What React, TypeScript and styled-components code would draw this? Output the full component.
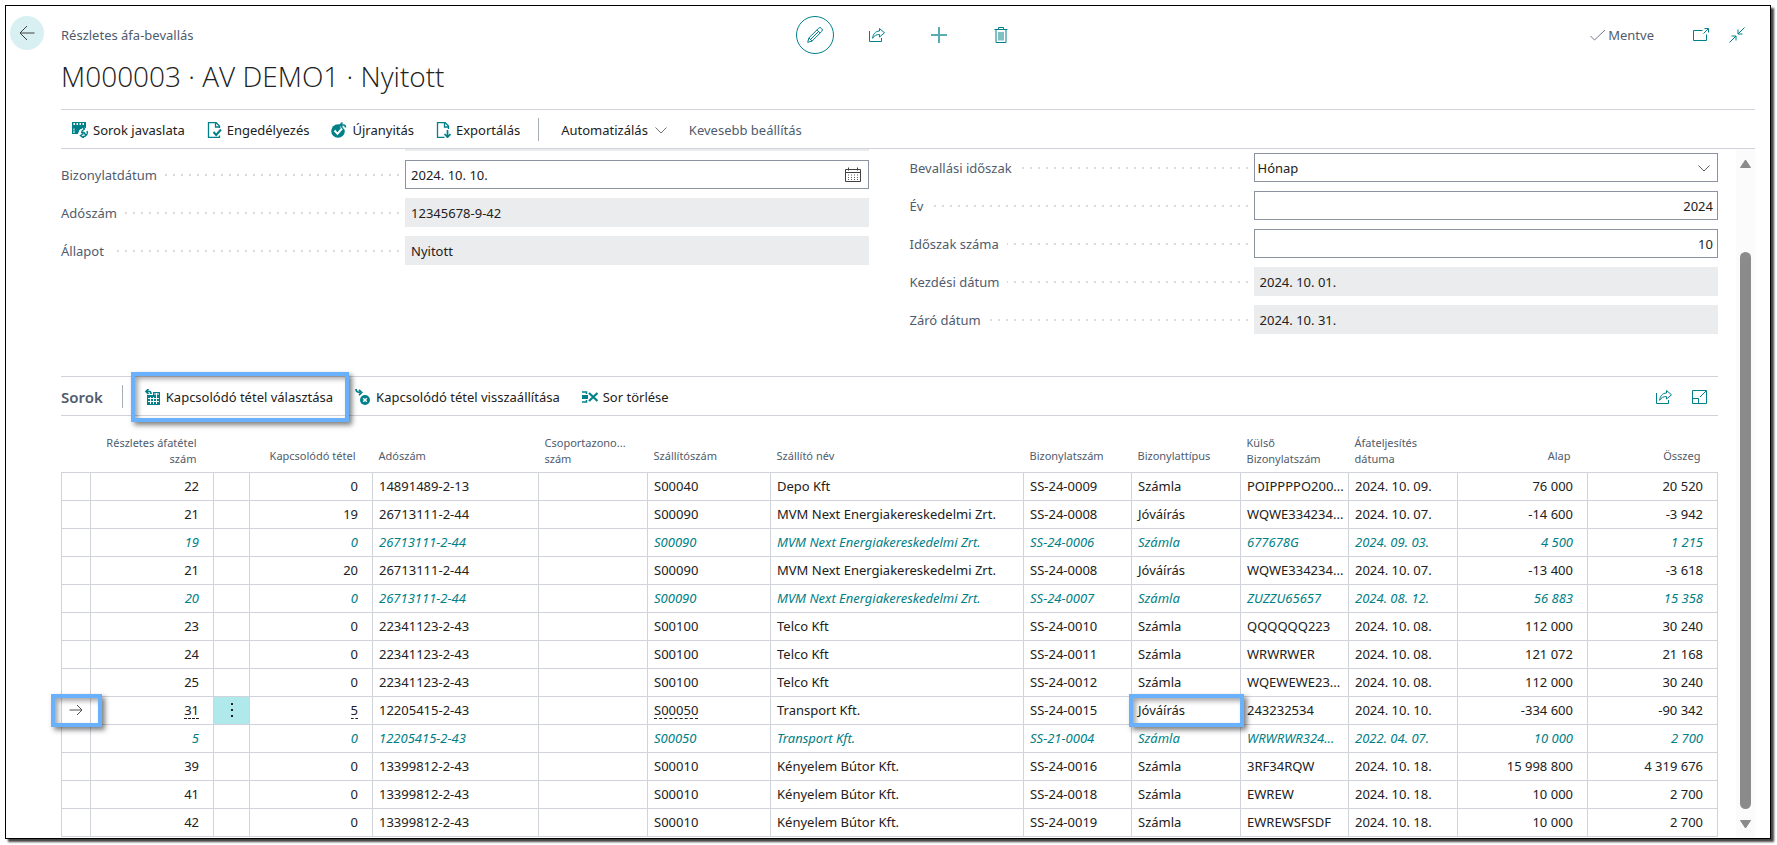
import React from 'react';
import styled, { createGlobalStyle, css } from 'styled-components';

const teal = '#008089';
const ink = '#212121';
const muted = '#505c6d';
const rule = '#d0d3d9';

const GlobalStyle = createGlobalStyle`
  *, *::before, *::after { box-sizing: border-box; }
  body {
    margin: 0;
    background: #fff;
    color: ${ink};
    font-family: "Noto Sans", "Open Sans", sans-serif;
    font-size: 13px;
    line-height: 20px;
    overflow: hidden;
  }
  button, input, select { font: inherit; color: inherit; }
  svg { display: block; flex: none; }
`;

const Frame = styled.div`
  display: flex;
  min-height: calc(100vh - 11px);
  margin: 5px 6px 6px 5px;
  border: 1px solid #000;
  background: #fff;
  box-shadow: 3px 3px 2px #444;
`;

const Gutter = styled.nav`
  flex: 0 0 55px;
  padding: 10px 0 0 4px;
`;

const BackButton = styled.button`
  display: flex;
  align-items: center;
  justify-content: center;
  width: 34px;
  height: 34px;
  padding: 0;
  border: 0;
  border-radius: 50%;
  background: #d9f0f2;
  color: #404040;
`;

const Page = styled.main`
  flex: 1;
  min-width: 0;
  display: flex;
  flex-direction: column;
  padding-right: 15px;
`;

const TopBar = styled.header`
  display: grid;
  grid-template-columns: 1fr auto 1fr;
  align-items: center;
  height: 38px;
  margin-top: 10px;
  color: ${muted};
`;

const TopActions = styled.div`
  display: flex;
  align-items: center;
  gap: 24px;
`;

const RoundButton = styled.button<{ $ring?: boolean }>`
  display: flex;
  align-items: center;
  justify-content: center;
  width: 38px;
  height: 38px;
  padding: 0;
  border: 1px solid ${(p) => (p.$ring ? teal : 'transparent')};
  border-radius: 50%;
  background: none;
  color: ${teal};
`;

const TopStatus = styled.div`
  display: flex;
  align-items: center;
  justify-content: flex-end;
  padding-right: 10px;
`;

const Saved = styled.span`
  display: flex;
  align-items: center;
  gap: 2px;
  margin-right: 39px;
`;

const IconButton = styled.button`
  display: flex;
  padding: 0;
  border: 0;
  background: none;
  color: ${teal};
`;

const IconGroup = styled.div`
  display: flex;
  align-items: center;
  gap: 20px;
`;

const Title = styled.h1`
  margin: 0;
  padding: 2px 0 13px;
  font-family: "Open Sans", "Noto Sans", sans-serif;
  font-size: 28px;
  line-height: 40px;
  font-weight: 300;
  color: ${ink};
`;

const ActionBar = styled.div`
  display: flex;
  align-items: center;
  height: 40px;
  padding: 1px 0 0 11px;
  border-top: 1px solid ${rule};
  border-bottom: 1px solid ${rule};
`;

const Action = styled.button<{ $muted?: boolean }>`
  display: flex;
  align-items: center;
  gap: 5px;
  margin-right: 22px;
  padding: 0;
  border: 0;
  background: none;
  white-space: nowrap;
  color: ${(p) => (p.$muted ? muted : ink)};
  svg { color: ${teal}; }
`;

const MenuAction = styled(Action)`
  gap: 7px;
  svg { color: #707070; }
`;

const Separator = styled.span`
  width: 1px;
  height: 23px;
  margin: 0 22px 0 -4px;
  background: #a9afb9;
`;

const Body = styled.div`
  flex: 1;
  display: flex;
  gap: 18px;
`;

const Content = styled.div`
  flex: 1;
  min-width: 0;
`;

const ScrollTrack = styled.div`
  flex: 0 0 19px;
  display: flex;
  flex-direction: column;
  align-items: center;
  padding: 10px 0 9px;
  background: #fbfbfb;
  color: #8b8b8b;
`;

const ScrollSpace = styled.span`
  flex: 83 0 0;
`;

const ScrollThumb = styled.span`
  flex: 556 0 0;
  width: 11px;
  margin-bottom: 10px;
  border-radius: 6px;
  background: #8b8b8b;
`;

const Fields = styled.div`
  display: grid;
  grid-template-columns: 1fr 1fr;
  gap: 40px;
  height: 227px;
`;

const FieldColumn = styled.div<{ $top?: number }>`
  display: flex;
  flex-direction: column;
  gap: 9px;
  padding-top: ${(p) => p.$top ?? 0}px;
`;

const FieldRow = styled.div`
  display: grid;
  grid-template-columns: 20fr 27fr;
  align-items: center;
`;

const CutOffField = styled.div`
  grid-column: 2;
  height: 2px;
  background: #ebecee;
`;

const FieldLabel = styled.label`
  display: flex;
  align-items: center;
  gap: 8px;
  padding-right: 6px;
  color: ${muted};
  white-space: nowrap;
  &::after {
    content: "";
    flex: 1;
    height: 2px;
    background: repeating-linear-gradient(to left, #d8dadd 0 2px, transparent 2px 8px);
  }
`;

const Box = styled.div<{ $readOnly?: boolean }>`
  display: grid;
  grid-template-columns: 1fr auto;
  align-items: center;
  height: 29px;
  border: 1px solid ${(p) => (p.$readOnly ? '#ebecee' : '#8c93a0')};
  background: ${(p) => (p.$readOnly ? '#ebecee' : '#fff')};
`;

const control = css`
  grid-row: 1;
  width: 100%;
  min-width: 0;
  height: 27px;
  border: 0;
  outline: 0;
  border-radius: 0;
  background: none;
`;

const TextInput = styled.input<{ $right?: boolean }>`
  ${control}
  grid-column: 1;
  padding: 0 4px 0 5px;
  text-align: ${(p) => (p.$right ? 'right' : 'left')};
`;

const Select = styled.select`
  ${control}
  grid-column: 1 / 3;
  padding: 0 3px;
  appearance: none;
`;

const BoxIcon = styled.span`
  grid-row: 1;
  grid-column: 2;
  padding-right: 7px;
  color: #606060;
  pointer-events: none;
`;

const LinesBar = styled(ActionBar)`
  padding-left: 0;
`;

const LinesTitle = styled.h2`
  margin: 0 23px 0 0;
  font-size: 15px;
  line-height: 20px;
  font-weight: 600;
  color: ${muted};
`;

const LinesTools = styled(IconGroup)`
  margin-left: auto;
  padding-right: 10px;
`;

const Marked = styled.div`
  position: relative;
`;

const Marker = styled.span<{ $y: number; $left: number; $right: number }>`
  position: absolute;
  z-index: 1;
  inset: ${(p) => `${-p.$y}px ${-p.$right}px ${-p.$y}px ${-p.$left}px`};
  border: 4px solid #6ab1fd;
  box-shadow: 3px 3px 5px rgba(0, 0, 0, 0.5), inset 3px 3px 5px rgba(0, 0, 0, 0.35);
  pointer-events: none;
`;

const Table = styled.table`
  width: 100%;
  margin-top: 17px;
  border-collapse: collapse;
  table-layout: fixed;
`;

const HeadCell = styled.th<{ $right?: boolean; $single?: boolean }>`
  height: 39px;
  padding: 0 ${(p) => (p.$right ? 17 : 0)}px ${(p) => (p.$single ? 8 : 5)}px ${(p) => (p.$right ? 0 : 6)}px;
  vertical-align: bottom;
  font-size: 11px;
  line-height: 16px;
  font-weight: 400;
  color: ${muted};
  text-align: ${(p) => (p.$right ? 'right' : 'left')};
  white-space: pre-line;
`;

const Row = styled.tr<{ $linked?: boolean }>`
  height: 28px;
  ${(p) => p.$linked && css`
    color: #007f87;
    font-style: italic;
  `}
`;

const Cell = styled.td<{ $right?: boolean; $active?: boolean }>`
  position: relative;
  padding: ${(p) => (p.$right ? '0 14px 0 0' : '0 0 0 6px')};
  border: 1px solid ${rule};
  text-align: ${(p) => (p.$right ? 'right' : 'left')};
  white-space: nowrap;
  background: ${(p) => (p.$active ? '#b0e9ec' : 'none')};
`;

const IconCell = styled(Cell)`
  padding: 0;
  svg, button { margin: 0 auto; }
`;

const DrillLink = styled.a`
  display: inline-block;
  line-height: 15px;
  color: inherit;
  text-decoration: none;
  border-bottom: 1px dashed ${ink};
`;

const Svg = ({ w = 16, h = 16, children, sw = 1 }: { w?: number; h?: number; sw?: number; children: React.ReactNode }) => (
  <svg width={w} height={h} viewBox={`0 0 ${w} ${h}`} fill="none" stroke="currentColor" strokeWidth={sw} aria-hidden="true">
    {children}
  </svg>
);

const ArrowLeft = () => <Svg><path d="M15.5 8H1M8 1L1 8l7 7" /></Svg>;
const Pencil = () => (
  <Svg>
    <path d="M.7 15.3l1.2-4.4L11.6 1.3a1.9 1.9 0 0 1 2.8 0l.3.3a1.9 1.9 0 0 1 0 2.8L5.1 14.1zM1.9 10.9l3.2 3.2M10 2.9l3.1 3.1M3.6 12.4L12 4" />
  </Svg>
);
const Share = () => (
  <Svg>
    <path d="M.5 4v10.500h12V11" />
    <path d="M10.500 1.500l5 4.300-5 4.200V7.600C7.500 7.400 5 8.600 3.700 11.300 3.900 7.200 6.300 4.200 10.500 4z" />
  </Svg>
);
const Plus = () => <Svg sw={2}><g opacity=".65"><path d="M8 0v16M0 8h16" /></g></Svg>;
const Trash = () => (
  <Svg>
    <path d="M1.500 2.500h13M5.500 2.500v-2h5v2M3 2.500v13h10v-13M6 5v8.500M8 5v8.500M10 5v8.500" />
  </Svg>
);
const Check = () => <Svg><path d="M.5 9l4 4L15 3" stroke="#707785" /></Svg>;
const PopOut = () => <Svg><path d="M9.500 3.500h-9v10h13V7.500M10.500 6.500L15 2M11.500 1.500h4v4" /></Svg>;
const Collapse = () => <Svg><path d="M.5 15.500L7 9M2.500 9H7v4.500M15.500.5L9 7M9 2.500V7h4.500" /></Svg>;
const Expand = () => <Svg><path d="M10 1.500H.5v13h14V6M.5 9.500h6v5M8 8l6-6M10 1.500h4.500V6" /></Svg>;
const Chevron = () => <Svg w={12} h={8}><path d="M.5 1.500l5.500 5.500 5.500-5.500" /></Svg>;
const Calendar = () => (
  <Svg>
    <path d="M.5 2.500h15v12H.5zM.5 5.500h15M3.500.5v3M12.500.5v3" stroke="#404040" />
    <path d="M3 8h10M3 10.500h10M3 12.500h10" strokeDasharray="1 2" />
  </Svg>
);
const SuggestLines = () => (
  <Svg>
    <path d="M0 0h14v6a6 6 0 0 0-8 6H0z" fill={teal} stroke="none" />
    <path d="M1.500 2h1.500M4.500 2H6M7.500 2H9M10.500 2H12M1.500 7.500h1M1.500 10h1" stroke="#fff" strokeWidth="2" />
    <path d="M6 10.500C6 8 7.500 6.500 9.500 6v-2l3 3-3 2.500M15 9c1 3-1 5.500-3.500 5.500V16l-3-2.500 3-2M9 10.500h3l2 3" strokeWidth="1.400" />
  </Svg>
);
const DocCheck = () => (
  <Svg w={15}>
    <path d="M12.500 6V4L9 .5H1.500v15h11v-2M8.500.5V5h4" strokeWidth="1.300" />
    <path d="M6.500 10l2.700 3L14 7.500" strokeWidth="2" />
  </Svg>
);
const Reopen = () => (
  <Svg>
    <circle cx="7" cy="9" r="6.800" fill={teal} stroke="none" />
    <path d="M3.500 8.500l3 3.300L11 6.500" stroke="#fff" strokeWidth="2" />
    <path d="M9 3.500h5.500v3.500" stroke="#fff" strokeWidth="4" />
    <path d="M11.500.5L9 3l2.500 2.500M9.500 3h3q2 0 2 2.500" strokeWidth="1.500" />
  </Svg>
);
const DocExport = () => (
  <Svg w={15}>
    <path d="M12.500 7V4L9 .5H1.500v15h7M8.500.5V5h4" strokeWidth="1.300" />
    <path d="M11.500 8v7M8.500 12l3 3.200 3-3.200" strokeWidth="1.700" />
  </Svg>
);
const PickEntry = () => (
  <Svg>
    <path d="M2 6h13v10H2zM8 3h7v3H8z" fill={teal} stroke="none" />
    <path d="M3 9.500h11M3 12.500h11M5.500 8v7M8.500 8v7M11.500 4v11M9 5h5" stroke="#fff" />
    <path d="M3.500 0L1 2.500 3.500 5M1 2.500h3.500Q6 2.500 6 5" strokeWidth="1.700" />
  </Svg>
);
const ResetEntry = () => (
  <Svg>
    <circle cx="10" cy="11" r="5" fill={teal} stroke="none" />
    <path d="M8.200 9.200l3.600 3.600M11.800 9.200l-3.600 3.600" stroke="#fff" strokeWidth="1.400" />
    <path d="M1 0q0 3.500 4.500 3.500M4 .8l2.700 2.700L4 6.200" strokeWidth="1.700" />
  </Svg>
);
const DeleteLine = () => (
  <Svg>
    <path d="M0 3h4.500v2M0 13h4.500v-2" strokeWidth="1.500" />
    <path d="M0 6h6v4H0z" fill={teal} stroke="none" />
    <path d="M7 4l8.500 8M15.500 4L7 12" strokeWidth="2.200" />
  </Svg>
);
const ArrowRight = () => <Svg w={14} h={12}><path d="M.5 6H13M8 1l5 5-5 5" stroke="#505050" /></Svg>;
const Dots = () => (
  <Svg w={4} h={16}><path d="M2 1v2M2 7v2M2 13v2" stroke={ink} strokeWidth="2" /></Svg>
);
const Triangle = ({ down }: { down?: boolean }) => (
  <Svg w={13} h={10}>
    <path d={down ? 'M1.500 1.500h10L6.500 9z' : 'M1.500 8.500h10L6.500 1z'} fill="currentColor" strokeLinejoin="round" />
  </Svg>
);

type FieldProps = { id: string; label: string; value: string; readOnly?: boolean; right?: boolean; icon?: React.ReactNode };

const Field = ({ id, label, value, readOnly, right, icon }: FieldProps) => (
  <FieldRow>
    <FieldLabel htmlFor={id}>{label}</FieldLabel>
    <Box $readOnly={readOnly}>
      <TextInput id={id} defaultValue={value} readOnly={readOnly} $right={right} />
      {icon && <BoxIcon>{icon}</BoxIcon>}
    </Box>
  </FieldRow>
);

const columns: { label: string; width: number; right?: boolean }[] = [
  { label: '', width: 29 },
  { label: 'Részletes áfatétel\nszám', width: 123, right: true },
  { label: '', width: 36 },
  { label: 'Kapcsolódó tétel', width: 123, right: true },
  { label: 'Adószám', width: 166 },
  { label: 'Csoportazono...\nszám', width: 109 },
  { label: 'Szállítószám', width: 123 },
  { label: 'Szállító név', width: 253 },
  { label: 'Bizonylatszám', width: 108 },
  { label: 'Bizonylattípus', width: 109 },
  { label: 'Külső\nBizonylatszám', width: 108 },
  { label: 'Áfateljesítés\ndátuma', width: 109 },
  { label: 'Alap', width: 130, right: true },
  { label: 'Összeg', width: 130, right: true },
];

type Line = [string, string, string, string, string, string, string, string, string, string, string];

const mvm = 'MVM Next Energiakereskedelmi Zrt.';
const lines: Line[] = [
  ['22', '0', '14891489-2-13', 'S00040', 'Depo Kft', 'SS-24-0009', 'Számla', 'POIPPPPO200...', '2024. 10. 09.', '76 000', '20 520'],
  ['21', '19', '26713111-2-44', 'S00090', mvm, 'SS-24-0008', 'Jóváírás', 'WQWE334234...', '2024. 10. 07.', '-14 600', '-3 942'],
  ['19', '0', '26713111-2-44', 'S00090', mvm, 'SS-24-0006', 'Számla', '677678G', '2024. 09. 03.', '4 500', '1 215'],
  ['21', '20', '26713111-2-44', 'S00090', mvm, 'SS-24-0008', 'Jóváírás', 'WQWE334234...', '2024. 10. 07.', '-13 400', '-3 618'],
  ['20', '0', '26713111-2-44', 'S00090', mvm, 'SS-24-0007', 'Számla', 'ZUZZU65657', '2024. 08. 12.', '56 883', '15 358'],
  ['23', '0', '22341123-2-43', 'S00100', 'Telco Kft', 'SS-24-0010', 'Számla', 'QQQQQQ223', '2024. 10. 08.', '112 000', '30 240'],
  ['24', '0', '22341123-2-43', 'S00100', 'Telco Kft', 'SS-24-0011', 'Számla', 'WRWRWER', '2024. 10. 08.', '121 072', '21 168'],
  ['25', '0', '22341123-2-43', 'S00100', 'Telco Kft', 'SS-24-0012', 'Számla', 'WQEWEWE23...', '2024. 10. 08.', '112 000', '30 240'],
  ['31', '5', '12205415-2-43', 'S00050', 'Transport Kft.', 'SS-24-0015', 'Jóváírás', '243232534', '2024. 10. 10.', '-334 600', '-90 342'],
  ['5', '0', '12205415-2-43', 'S00050', 'Transport Kft.', 'SS-21-0004', 'Számla', 'WRWRWR324...', '2022. 04. 07.', '10 000', '2 700'],
  ['39', '0', '13399812-2-43', 'S00010', 'Kényelem Bútor Kft.', 'SS-24-0016', 'Számla', '3RF34RQW', '2024. 10. 18.', '15 998 800', '4 319 676'],
  ['41', '0', '13399812-2-43', 'S00010', 'Kényelem Bútor Kft.', 'SS-24-0018', 'Számla', 'EWREW', '2024. 10. 18.', '10 000', '2 700'],
  ['42', '0', '13399812-2-43', 'S00010', 'Kényelem Bútor Kft.', 'SS-24-0019', 'Számla', 'EWREWSFSDF', '2024. 10. 18.', '10 000', '2 700'],
];
const linkedLines = ['19', '20', '5'];

const LineRow = ({ line }: { line: Line }) => {
  const [entry, related, taxNo, vendor, name, docNo, docType, extNo, date, base, amount] = line;
  const current = entry === '31';
  const drill = (text: string) => (current ? <DrillLink href="#">{text}</DrillLink> : text);
  return (
    <Row $linked={linkedLines.includes(entry)}>
      <IconCell>
        {current && <ArrowRight />}
        {current && <Marker $y={3} $left={11} $right={12} />}
      </IconCell>
      <Cell $right>{drill(entry)}</Cell>
      <IconCell $active={current}>
        {current && <IconButton aria-label="Sor műveletei"><Dots /></IconButton>}
      </IconCell>
      <Cell $right>{drill(related)}</Cell>
      <Cell>{taxNo}</Cell>
      <Cell />
      <Cell>{drill(vendor)}</Cell>
      <Cell>{name}</Cell>
      <Cell>{docNo}</Cell>
      <Cell>
        {docType}
        {current && <Marker $y={3} $left={3} $right={4} />}
      </Cell>
      <Cell>{extNo}</Cell>
      <Cell>{date}</Cell>
      <Cell $right>{base}</Cell>
      <Cell $right>{amount}</Cell>
    </Row>
  );
};

export default function App() {
  return (
    <>
      <GlobalStyle />
      <Frame>
        <Gutter>
          <BackButton aria-label="Vissza"><ArrowLeft /></BackButton>
        </Gutter>
        <Page>
          <TopBar>
            <span>Részletes áfa-bevallás</span>
            <TopActions>
              <RoundButton $ring aria-label="Szerkesztés"><Pencil /></RoundButton>
              <RoundButton aria-label="Megosztás"><Share /></RoundButton>
              <RoundButton aria-label="Új"><Plus /></RoundButton>
              <RoundButton aria-label="Törlés"><Trash /></RoundButton>
            </TopActions>
            <TopStatus>
              <Saved><Check />Mentve</Saved>
              <IconGroup>
                <IconButton aria-label="Megnyitás új ablakban"><PopOut /></IconButton>
                <IconButton aria-label="Kicsinyítés"><Collapse /></IconButton>
              </IconGroup>
            </TopStatus>
          </TopBar>
          <Title>M000003 · AV DEMO1 · Nyitott</Title>
          <ActionBar>
            <Action><SuggestLines />Sorok javaslata</Action>
            <Action><DocCheck />Engedélyezés</Action>
            <Action><Reopen />Újranyitás</Action>
            <Action><DocExport />Exportálás</Action>
            <Separator />
            <MenuAction>Automatizálás<Chevron /></MenuAction>
            <Action $muted>Kevesebb beállítás</Action>
          </ActionBar>
          <Body>
            <Content>
              <Fields>
                <FieldColumn>
                  <FieldRow><CutOffField /></FieldRow>
                  <Field id="date" label="Bizonylatdátum" value="2024. 10. 10." icon={<Calendar />} />
                  <Field id="tax" label="Adószám" value="12345678-9-42" readOnly />
                  <Field id="state" label="Állapot" value="Nyitott" readOnly />
                </FieldColumn>
                <FieldColumn $top={4}>
                  <FieldRow>
                    <FieldLabel htmlFor="period">Bevallási időszak</FieldLabel>
                    <Box>
                      <Select id="period" defaultValue="Hónap"><option>Hónap</option></Select>
                      <BoxIcon><Chevron /></BoxIcon>
                    </Box>
                  </FieldRow>
                  <Field id="year" label="Év" value="2024" right />
                  <Field id="number" label="Időszak száma" value="10" right />
                  <Field id="start" label="Kezdési dátum" value="2024. 10. 01." readOnly />
                  <Field id="end" label="Záró dátum" value="2024. 10. 31." readOnly />
                </FieldColumn>
              </Fields>
              <LinesBar>
                <LinesTitle>Sorok</LinesTitle>
                <Separator />
                <Marked>
                  <Action><PickEntry />Kapcsolódó tétel választása</Action>
                  <Marker $y={15} $left={14} $right={-6} />
                </Marked>
                <Action><ResetEntry />Kapcsolódó tétel visszaállítása</Action>
                <Action><DeleteLine />Sor törlése</Action>
                <LinesTools>
                  <IconButton aria-label="Megosztás"><Share /></IconButton>
                  <IconButton aria-label="Kibontás"><Expand /></IconButton>
                </LinesTools>
              </LinesBar>
              <Table>
                <colgroup>
                  {columns.map((c, i) => <col key={i} width={c.width} />)}
                </colgroup>
                <thead>
                  <tr>
                    {columns.map((c, i) => (
                      <HeadCell key={i} $right={c.right} $single={!c.label.includes('\n')}>{c.label}</HeadCell>
                    ))}
                  </tr>
                </thead>
                <tbody>
                  {lines.map((line) => <LineRow key={line[0] + line[1]} line={line} />)}
                </tbody>
              </Table>
            </Content>
            <ScrollTrack>
              <Triangle />
              <ScrollSpace />
              <ScrollThumb />
              <Triangle down />
            </ScrollTrack>
          </Body>
        </Page>
      </Frame>
    </>
  );
}
